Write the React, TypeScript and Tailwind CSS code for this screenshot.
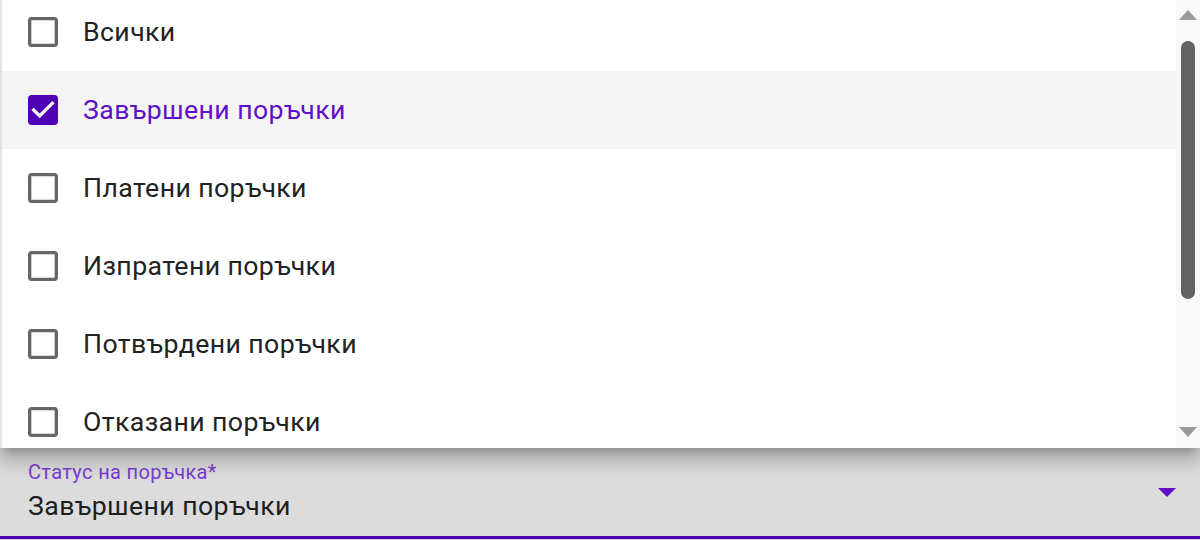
import React from "react";

const items = [
  { label: "Всички", checked: false },
  { label: "Завършени поръчки", checked: true },
  { label: "Платени поръчки", checked: false },
  { label: "Изпратени поръчки", checked: false },
  { label: "Потвърдени поръчки", checked: false },
  { label: "Отказани поръчки", checked: false },
];

function Box({ checked }: { checked: boolean }) {
  if (checked) {
    return (
      <svg width="40" height="40" viewBox="0 0 24 24" className="shrink-0">
        <path
          fill="#5000b4"
          d="M19 3H5c-1.11 0-2 .9-2 2v14c0 1.1.89 2 2 2h14c1.11 0 2-.9 2-2V5c0-1.1-.89-2-2-2zm-9 14l-5-5 1.41-1.41L10 14.17l7.59-7.59L19 8l-9 9z"
        />
      </svg>
    );
  }
  return (
    <svg width="40" height="40" viewBox="0 0 24 24" className="shrink-0">
      <path
        fill="#666666"
        d="M19 5v14H5V5h14m0-2H5c-1.1 0-2 .9-2 2v14c0 1.1.9 2 2 2h14c1.1 0 2-.9 2-2V5c0-1.1-.9-2-2-2z"
      />
    </svg>
  );
}

export default function App() {
  return (
    <div
      className="w-[1200px] h-[540px] flex flex-col bg-[#dcdcdc] overflow-hidden"
      style={{ fontFamily: "Roboto, 'Noto Sans', sans-serif" }}
    >
      <div className="relative z-10 h-[448px] shrink-0 flex bg-white border-l-2 border-[#e2e2e2] shadow-[0_8px_8px_-5px_rgba(0,0,0,0.2),0_13px_17px_2px_rgba(0,0,0,0.14),0_5px_23px_3px_rgba(0,0,0,0.12)]">
        <div className="flex-1 overflow-hidden">
          <div className="-mt-[7px]">
            {items.map((it) => (
              <div
                key={it.label}
                className={`h-[78px] flex items-center pl-[21px] gap-[20px] ${
                  it.checked ? "bg-[#f4f4f4]" : ""
                }`}
              >
                <Box checked={it.checked} />
                <span
                  className={`text-[26.67px] tracking-[0.4px] ${
                    it.checked ? "text-[#5f0fc8]" : "text-[#222222]"
                  }`}
                >
                  {it.label}
                </span>
              </div>
            ))}
          </div>
        </div>
        <div className="w-[24px] bg-[#f8f8f8] flex flex-col items-center pt-[10px] pb-[11px]">
          <svg width="18" height="10" viewBox="0 0 18 10" className="shrink-0">
            <path d="M9 0L18 10H0z" fill="#9a9a9a" />
          </svg>
          <div className="mt-[21px] w-[14px] h-[258px] rounded-full bg-[#626262]" />
          <div className="flex-1" />
          <svg width="18" height="10" viewBox="0 0 18 10" className="shrink-0">
            <path d="M0 0H18L9 10z" fill="#9a9a9a" />
          </svg>
        </div>
      </div>
      <div className="relative flex-1 flex flex-col border-b-[3px] border-[#5000b4] mb-[1px]">
        <div className="pl-[28px] pt-[12px] text-[20px] leading-[24px] tracking-[0.35px] text-[#7a3bd4]">
          Статус на поръчка*
        </div>
        <div className="flex items-center pl-[28px] pr-[24px] mt-[6px]">
          <span className="flex-1 text-[26.67px] leading-[32px] tracking-[0.4px] text-[#1e1e1e]">
            Завършени поръчки
          </span>
          <svg width="18" height="9" viewBox="0 0 18 9" className="-mt-[28px]">
            <path d="M0 0H18L9 9z" fill="#5f10c8" />
          </svg>
        </div>
      </div>
    </div>
  );
}
